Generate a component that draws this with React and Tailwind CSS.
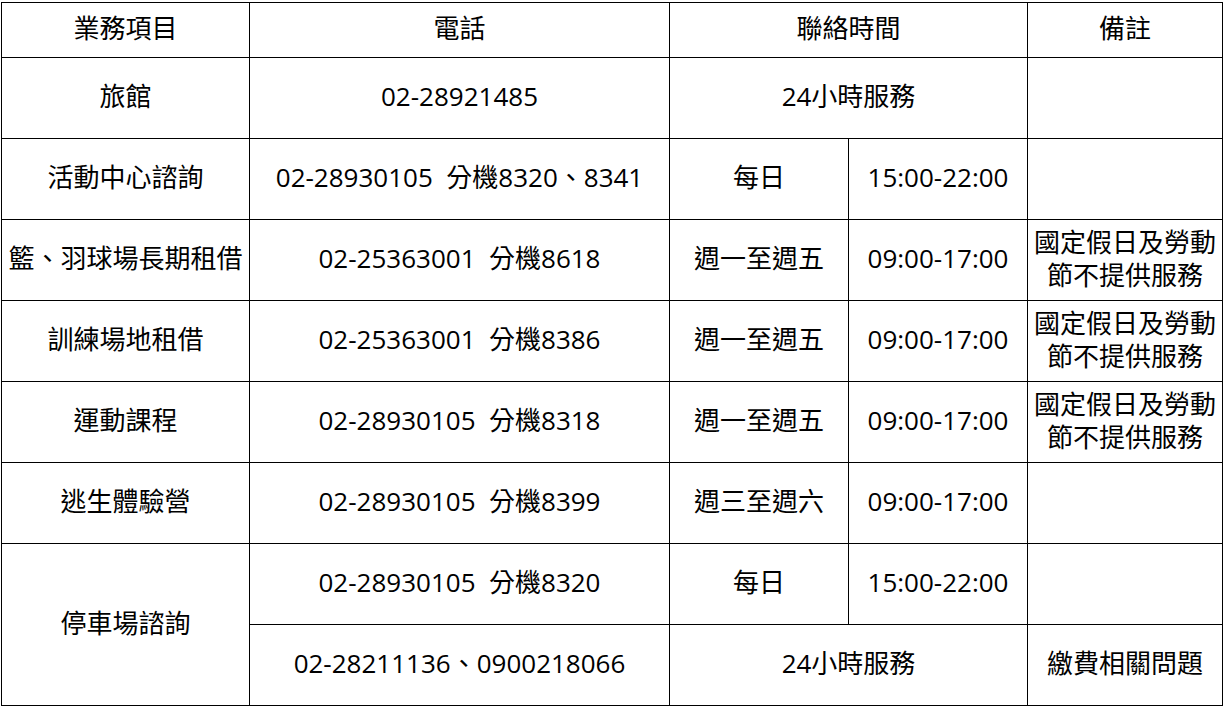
import React from 'react';

const cell = 'border border-black text-center align-middle p-0 pb-[3px]';

function Remark() {
  return (
    <div className="leading-[33px]">
      國定假日及勞動
      <br />
      節不提供服務
    </div>
  );
}

export default function App() {
  return (
    <div className="bg-white w-[1223px] h-[707px] pt-[2px] pl-px text-black text-[26px] font-['Open_Sans','Noto_Sans_CJK_TC',sans-serif]">
      <table className="table-fixed border-collapse w-[1221px]">
        <colgroup>
          <col className="w-[248px]" />
          <col className="w-[420px]" />
          <col className="w-[179px]" />
          <col className="w-[179px]" />
          <col className="w-[195px]" />
        </colgroup>
        <tbody>
          <tr className="h-[55px]">
            <td className={cell}>業務項目</td>
            <td className={cell}>電話</td>
            <td className={cell} colSpan={2}>聯絡時間</td>
            <td className={cell}>備註</td>
          </tr>
          <tr className="h-[81px]">
            <td className={cell}>旅館</td>
            <td className={cell}>02-28921485</td>
            <td className={cell} colSpan={2}>24小時服務</td>
            <td className={cell}></td>
          </tr>
          <tr className="h-[81px]">
            <td className={cell}>活動中心諮詢</td>
            <td className={`${cell} whitespace-pre`}>02-28930105  分機8320、8341</td>
            <td className={cell}>每日</td>
            <td className={cell}>15:00-22:00</td>
            <td className={cell}></td>
          </tr>
          <tr className="h-[81px]">
            <td className={`${cell} whitespace-nowrap`}>籃、羽球場長期租借</td>
            <td className={`${cell} whitespace-pre`}>02-25363001  分機8618</td>
            <td className={cell}>週一至週五</td>
            <td className={cell}>09:00-17:00</td>
            <td className={cell}><Remark /></td>
          </tr>
          <tr className="h-[81px]">
            <td className={cell}>訓練場地租借</td>
            <td className={`${cell} whitespace-pre`}>02-25363001  分機8386</td>
            <td className={cell}>週一至週五</td>
            <td className={cell}>09:00-17:00</td>
            <td className={cell}><Remark /></td>
          </tr>
          <tr className="h-[81px]">
            <td className={cell}>運動課程</td>
            <td className={`${cell} whitespace-pre`}>02-28930105  分機8318</td>
            <td className={cell}>週一至週五</td>
            <td className={cell}>09:00-17:00</td>
            <td className={cell}><Remark /></td>
          </tr>
          <tr className="h-[81px]">
            <td className={cell}>逃生體驗營</td>
            <td className={`${cell} whitespace-pre`}>02-28930105  分機8399</td>
            <td className={cell}>週三至週六</td>
            <td className={cell}>09:00-17:00</td>
            <td className={cell}></td>
          </tr>
          <tr className="h-[81px]">
            <td className={cell} rowSpan={2}>停車場諮詢</td>
            <td className={`${cell} whitespace-pre`}>02-28930105  分機8320</td>
            <td className={cell}>每日</td>
            <td className={cell}>15:00-22:00</td>
            <td className={cell}></td>
          </tr>
          <tr className="h-[81px]">
            <td className={cell}>02-28211136、0900218066</td>
            <td className={cell} colSpan={2}>24小時服務</td>
            <td className={cell}>繳費相關問題</td>
          </tr>
        </tbody>
      </table>
    </div>
  );
}
